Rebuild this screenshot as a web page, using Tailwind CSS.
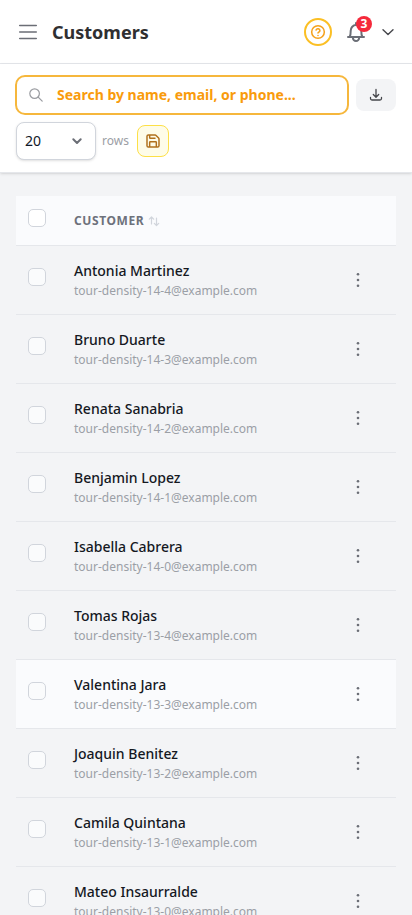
<!DOCTYPE html>
<html lang="en">
<head>
<meta charset="utf-8">
<meta name="viewport" content="width=device-width, initial-scale=1">
<title>Customers</title>
<script src="https://cdn.jsdelivr.net/npm/@tailwindcss/browser@4"></script>
</head>
<body class="h-[915px] overflow-hidden bg-[#f3f4f6] font-['Noto_Sans',sans-serif] text-gray-900">
<header class="flex h-16 items-center border-b border-gray-200 bg-white pr-4 pl-4">
  <button class="flex size-6 items-center justify-center text-[#6b6e76]" aria-label="Menu">
    <svg class="size-6" viewBox="0 0 24 24" fill="none" stroke="currentColor" stroke-width="1.6" stroke-linecap="round"><path d="M3.750 5.500h16.500M3.750 12h16.500M3.750 18.500h16.500"/></svg>
  </button>
  <h1 class="ml-3 text-lg leading-7 font-bold text-[#2f2f31]">Customers</h1>
  <div class="ml-auto flex items-center">
    <button class="flex size-7 items-center justify-center rounded-full border-2 border-[#fbbf24] text-[#f5a11b]" aria-label="Help">
      <svg class="size-4" viewBox="0 0 24 24" fill="none" stroke="currentColor" stroke-width="2.300" stroke-linecap="round" stroke-linejoin="round"><circle cx="12" cy="12" r="9.500"/><path d="M9.100 9a3 3 0 0 1 5.800 1c0 2-2.900 2.200-2.900 3.600M12 17.200h.01"/></svg>
    </button>
    <button class="relative ml-3 flex size-6 items-center justify-center text-[#6b6e76]" aria-label="Notifications">
      <svg class="size-6" viewBox="0 0 24 24" fill="none" stroke="currentColor" stroke-width="2" stroke-linecap="round" stroke-linejoin="round"><path d="M12 3v1.600M4 17h16M5.700 17c1-1.700 1-3.200 1-6.200a5.300 5.800 0 0 1 10.600 0c0 3 0 4.500 1 6.200M8.900 17.700a3.100 3.400 0 0 0 6.200 0"/></svg>
      <span class="absolute top-[-4px] left-3 flex size-4 items-center justify-center rounded-full bg-[#f5293b] text-xs leading-4 font-bold text-white">3</span>
    </button>
    <button class="ml-3 flex size-4 items-center justify-center text-[#46474c]" aria-label="Account">
      <svg class="size-4" viewBox="0 0 16 16" fill="none" stroke="currentColor" stroke-width="1.400" stroke-linecap="round" stroke-linejoin="round"><path d="m3 5.700 5 4.800 5-4.800"/></svg>
    </button>
  </div>
</header>
<section class="h-[109px] border-b border-gray-200 bg-white px-[15px] pt-[11px] shadow-sm">
  <div class="flex items-center">
    <div class="flex h-10 w-[334px] items-center rounded-[10px] border-2 border-[#f6b73c] pl-[11px]">
      <svg class="size-4 text-[#9a9ca1]" viewBox="0 0 16 16" fill="none" stroke="currentColor" stroke-width="1.200" stroke-linecap="round"><circle cx="6.600" cy="6.600" r="4.800"/><path d="m10.200 10.200 4 4"/></svg>
      <span class="ml-[13px] text-sm font-bold text-[#f99b0c]">Search by name, email, or phone...</span>
    </div>
    <button class="ml-[7px] flex h-8 w-10 items-center justify-center rounded-lg bg-gray-100 text-[#46474c]" aria-label="Download">
      <svg class="size-4" viewBox="0 0 16 16" fill="none" stroke="currentColor" stroke-width="1.300" stroke-linecap="round" stroke-linejoin="round"><path d="M8 2.500v7.500M5.300 7.500 8 10.200l2.700-2.700M2.500 10.500v1a1.500 1.500 0 0 0 1.500 1.500h8a1.500 1.500 0 0 0 1.500-1.500v-1"/></svg>
    </button>
  </div>
  <div class="mt-[7px] flex items-center pl-px">
    <div class="flex h-[38px] w-20 items-center justify-between rounded-lg border border-gray-300 bg-white pr-[10px] pl-2 shadow-sm">
      <span class="text-sm">20</span>
      <svg class="size-4 text-[#6b6e76]" viewBox="0 0 16 16" fill="none" stroke="currentColor" stroke-width="2" stroke-linecap="round" stroke-linejoin="round"><path d="m4.300 6.300 3.700 3.700 3.700-3.700"/></svg>
    </div>
    <span class="ml-1.5 text-xs text-[#9b9ea5]">rows</span>
    <button class="ml-2 flex size-8 items-center justify-center rounded-lg border border-[#fde047] bg-[#fefce8] text-[#b0701c]" aria-label="Save">
      <svg class="size-4" viewBox="0 0 24 24" fill="none" stroke="currentColor" stroke-width="2.200" stroke-linecap="round" stroke-linejoin="round"><path d="M15.200 3a2 2 0 0 1 1.400.6l3.800 3.800a2 2 0 0 1 .6 1.400V19a2 2 0 0 1-2 2H5a2 2 0 0 1-2-2V5a2 2 0 0 1 2-2zM17 21v-7a1 1 0 0 0-1-1H8a1 1 0 0 0-1 1v7M7 3v4a1 1 0 0 0 1 1h7"/></svg>
    </button>
  </div>
</section>
<main class="px-4 pt-[23px]">
  <div class="flex h-[50px] border-b border-gray-200 bg-[#fafbfd] pl-3">
    <span class="mt-[13px] size-[18px] rounded-[5px] border border-gray-300 bg-white"></span>
    <div class="ml-7 flex h-[49px] items-center">
      <span class="text-xs font-bold tracking-[0.6px] text-[#6d717b]">CUSTOMER</span>
      <svg class="ml-1 h-3 w-3 text-gray-300" viewBox="0 0 12 12" fill="none" stroke="currentColor" stroke-width="1.200" stroke-linecap="round" stroke-linejoin="round"><path d="M3.500 9V2M1.300 4.200 3.500 2l2.200 2.200M8.500 3v7.500M6.300 8.300l2.200 2.200 2.200-2.200"/></svg>
    </div>
  </div>
  <div id="rows"></div>
</main>
<template id="row">
  <div class="flex h-[69px] border-b border-gray-200 pl-3">
    <span class="mt-[22px] size-[18px] shrink-0 rounded-[5px] border border-gray-300 bg-[#fafbfc]"></span>
    <div class="ml-7 flex-1 pt-[15px]">
      <p class="text-sm leading-5 font-medium text-[#15181f]"></p>
      <p class="mt-0.5 text-xs leading-4 text-[#9b9fa6]"></p>
    </div>
    <svg class="mt-[26px] mr-[30px] size-4 text-[#6b6e76]" viewBox="0 0 16 16" fill="currentColor"><circle cx="8" cy="2.200" r="1.300"/><circle cx="8" cy="8" r="1.300"/><circle cx="8" cy="13.800" r="1.300"/></svg>
  </div>
</template>
<script>
const customers = [
  ["Antonia Martinez", "14-4"], ["Bruno Duarte", "14-3"], ["Renata Sanabria", "14-2"],
  ["Benjamin Lopez", "14-1"], ["Isabella Cabrera", "14-0"], ["Tomas Rojas", "13-4"],
  ["Valentina Jara", "13-3"], ["Joaquin Benitez", "13-2"], ["Camila Quintana", "13-1"],
  ["Mateo Insaurralde", "13-0"]
];
const tpl = document.getElementById("row");
for (const [name, id] of customers) {
  const row = tpl.content.cloneNode(true);
  const [n, e] = row.querySelectorAll("p");
  n.textContent = name;
  e.textContent = `tour-density-${id}@example.com`;
  if (id === "13-3") row.firstElementChild.classList.add("bg-[#fafbfd]");
  document.getElementById("rows").append(row);
}
</script>
</body>
</html>
